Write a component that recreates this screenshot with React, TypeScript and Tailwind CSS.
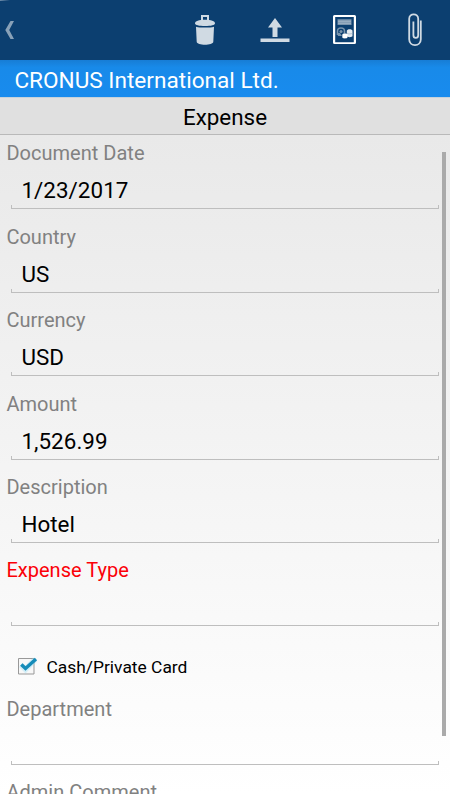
type FieldProps = { label: string; value?: string; required?: boolean };

function Field({ label, value = "", required = false }: FieldProps) {
  return (
    <div className="h-[74px] shrink-0">
      <div className={`h-9 pl-[6.4px] text-[20px] leading-[36px] tracking-[0.02px] ${required ? "text-[#fb0007]" : "text-[#818181]"}`}>
        {label}
      </div>
      <div className="mx-[11px] flex h-[38px] flex-col">
        <div className="h-[34px] pl-[10.4px] text-[22.4px] leading-[38px] tracking-[0.05px] text-black">{value}</div>
        <div className="h-1 border-x border-b border-[#bebebe]" />
      </div>
    </div>
  );
}

function Toolbar() {
  return (
    <header className="flex h-[60px] shrink-0 items-center bg-[#0c3f70]">
      <svg className="h-[60px] w-[450px]" viewBox="0 0 450 60" fill="#d0dae3">
        <path d="M0 0h10L0 1z" opacity=".5" />
        <path d="M10.500 21h3.500L9.200 30l4.800 9h-3.500L5.300 30z" fill="#89a1b8" />
        <path d="M201 20v-5h8v5h-2v-3h-4v3z" />
        <path d="M195 23.500c0-2.600 4-3.700 10-3.700s10 1.100 10 3.700c0 1.600-4 2.500-10 2.500s-10-.9-10-2.500z" />
        <path d="M196 26.700c4 1.200 14 1.200 18 0l-.7 15c-.1 4-16.500 4-16.600 0z" />
        <path d="M275 18l7 9.400h-4.500V37h-5v-9.600h-4.500zM260.500 38.500h29v3.500h-29z" />
        <path d="M333 16.500q0-1.500 1.500-1.500h20q1.500 0 1.500 1.500v26q0 1.500-1.500 1.500h-20q-1.500 0-1.500-1.500zM335.200 17v25.200h18.600V17z" fill="#fff" fillRule="evenodd" />
        <path d="M337.500 19.200h14v5.800h-14z" fill="#7893ac" />
        <path d="M338 21.200h13M338 23.200h13" stroke="#b4c4d3" strokeWidth=".8" />
        <path d="M337.500 35v-4c0-4 7-4 7 0v2.500" fill="none" stroke="#7893ac" strokeWidth="1.600" />
        <circle cx="341" cy="31.500" r="1.600" fill="#7893ac" />
        <path d="M337 33h3l2 3h-4z" fill="#7893ac" />
        <path d="M346.800 30.800c0-2.200 5.700-2.200 5.700 0V36c0 1.500-5.700 1.500-5.700 0z" fill="#e6ecf1" />
        <path d="M342.300 34.800c0-1.800 5.200-1.800 5.200 0v2.400c0 1.600-5.200 1.600-5.200 0z" fill="#fff" />
        <path d="M347 33.200c1.500 1 4 1 5.500 0" fill="none" stroke="#9fb3c5" strokeWidth=".7" />
        <path d="M420.800 20.500v18.700c0 8-11.600 8-11.600 0V18.800c0-5.900 9-5.900 9 0v16.400c0 3.500-4.800 3.500-4.800 0V21.500" fill="none" stroke="#d0dae3" strokeWidth="1.800" />
      </svg>
    </header>
  );
}

export default function App() {
  return (
    <div className="relative flex h-[800px] w-[450px] flex-col overflow-hidden bg-white font-[Roboto,sans-serif]">
      <Toolbar />
      <div className="h-[37px] shrink-0 bg-linear-to-b from-[#177dd5] via-[#188ae9] via-20% to-[#188bee] pl-[14.4px] text-[22.600px] leading-[41px] text-white">
        CRONUS International Ltd.
      </div>
      <h1 className="h-[38px] shrink-0 border-t border-b border-t-[#c5d2dc] border-b-[#b9b9b9] bg-[#e0e0e0] text-center text-[22.4px] leading-[39px] text-black">
        Expense
      </h1>
      <main className="flex h-[659px] shrink-0 flex-col overflow-hidden bg-linear-to-b from-[#e9e9e9] to-white pt-[0.4px]">
        <div className="flex shrink-0 flex-col gap-[9.4px]">
          <Field label="Document Date" value="1/23/2017" />
          <Field label="Country" value="US" />
          <Field label="Currency" value="USD" />
          <Field label="Amount" value="1,526.99" />
          <Field label="Description" value="Hotel" />
          <Field label="Expense Type" required />
        </div>
        <label className="flex h-[64.2px] shrink-0 items-center pt-4 pl-[17px] text-[17.4px] text-black">
          <svg className="h-5 w-[22px]" viewBox="0 0 22 20">
            <path d="M1.500 2.500h15.500v15.500h-15.500z" fill="#f8f8f8" stroke="#999" />
            <path d="M4 9l4.500 4.500L18 3.500" fill="none" stroke="#8edcf5" strokeWidth="5.500" opacity=".35" />
            <path d="M4.300 8.500l4.200 4L19 3" fill="none" stroke="#168cb9" strokeWidth="3.400" />
          </svg>
          <span className="ml-[7.5px] pt-[2px]">Cash/Private Card</span>
        </label>
        <div className="flex shrink-0 flex-col gap-[9.4px]">
          <Field label="Department" />
          <Field label="Admin Comment" />
        </div>
      </main>
      <div className="absolute top-[152px] left-[442px] h-[584px] w-1 bg-[#aaa]" />
    </div>
  );
}
